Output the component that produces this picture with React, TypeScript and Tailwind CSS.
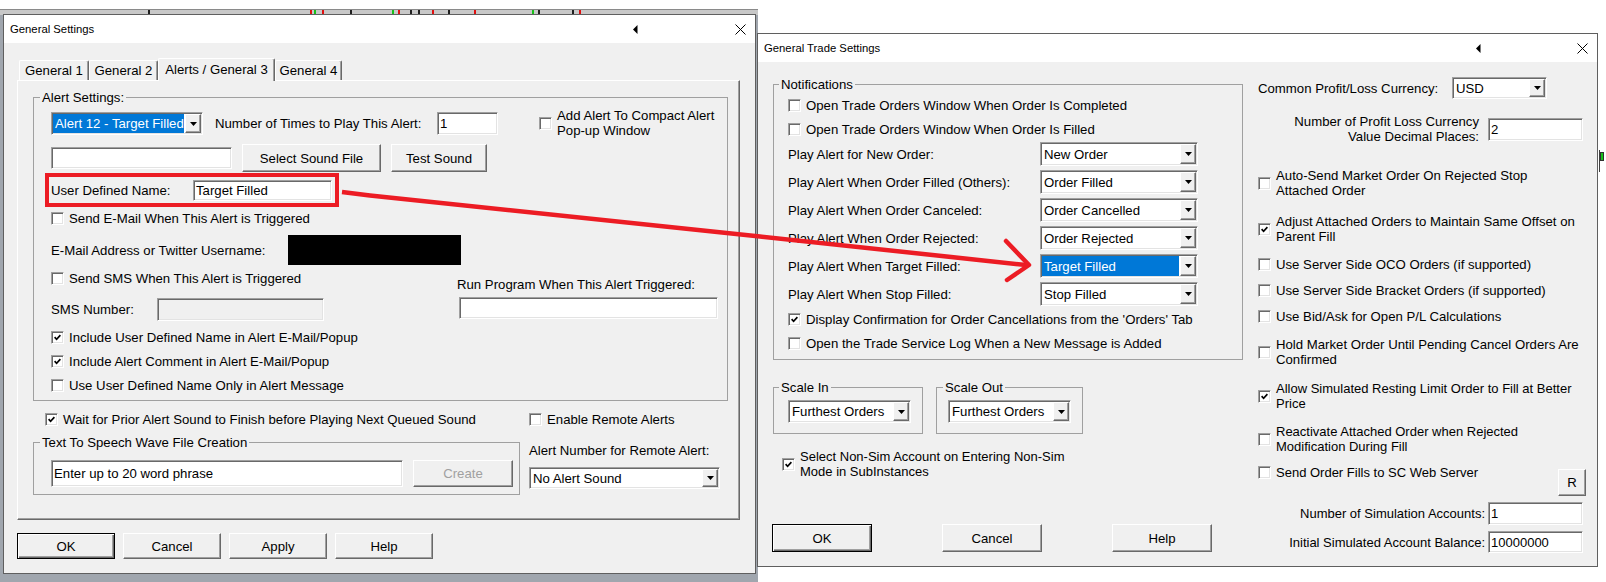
import React from 'react';

// classic 3D frames
const sunken =
  'border border-t-[#a0a0a0] border-l-[#a0a0a0] border-b-white border-r-white shadow-[inset_1px_1px_0_#696969,inset_-1px_-1px_0_#e3e3e3]';
const raised =
  'border border-t-white border-l-white border-b-[#696969] border-r-[#696969] shadow-[inset_-1px_-1px_0_#a0a0a0]';

function Box({ checked = false }: { checked?: boolean }) {
  return (
    <span className={`w-[13px] h-[13px] shrink-0 bg-white ${sunken} flex items-center justify-center`}>
      {checked && (
        <svg width="7" height="7" viewBox="0 0 7 7">
          <path d="M0.6 3.2 L2.6 5.3 L6.4 1.2" fill="none" stroke="#000" strokeWidth="1.7" />
        </svg>
      )}
    </span>
  );
}

function Check({ checked = false, label, className = '' }: { checked?: boolean; label: React.ReactNode; className?: string }) {
  return (
    <div className={`flex items-center shrink-0 ${className}`}>
      <Box checked={checked} />
      <span className="ml-[5px] whitespace-nowrap leading-[15px]">{label}</span>
    </div>
  );
}

function Edit({ value = '', className = '', disabled = false }: { value?: string; className?: string; disabled?: boolean }) {
  return (
    <div className={`${sunken} p-[1px] flex items-center shrink-0 ${disabled ? 'bg-[#f0f0f0]' : 'bg-white'} ${className}`}>
      <span className="pl-[1px] whitespace-nowrap">{value}</span>
    </div>
  );
}

function Combo({ value, selected = false, className = '' }: { value: string; selected?: boolean; className?: string }) {
  return (
    <div className={`${sunken} bg-white flex shrink-0 ${className}`}>
      <div className="flex-1 min-w-0 flex p-[1px]">
        <div
          className={`flex-1 flex items-center pl-[2px] whitespace-nowrap overflow-hidden ${
            selected ? 'bg-[#0078d7] text-white' : ''
          }`}
        >
          {value}
        </div>
      </div>
      <div className={`w-[16px] my-[1px] mr-[1px] bg-[#f0f0f0] ${raised} flex items-center justify-center`}>
        <svg width="7" height="4" viewBox="0 0 7 4">
          <path d="M0 0H7L3.5 4Z" fill="#000" />
        </svg>
      </div>
    </div>
  );
}

function Btn({
  label,
  className = '',
  primary = false,
  disabled = false,
}: {
  label: string;
  className?: string;
  primary?: boolean;
  disabled?: boolean;
}) {
  const frame = primary
    ? 'border border-black shadow-[inset_1px_1px_0_#fff,inset_-1px_-1px_0_#696969,inset_-2px_-2px_0_#a0a0a0]'
    : raised;
  return (
    <div
      className={`${frame} bg-[#f0f0f0] flex items-center justify-center shrink-0 whitespace-nowrap ${
        disabled ? 'text-[#a0a0a0]' : ''
      } ${className}`}
    >
      {label}
    </div>
  );
}

function Group({
  title,
  className = '',
  legendClass = 'ml-[6px]',
  children,
}: {
  title: string;
  className?: string;
  legendClass?: string;
  children?: React.ReactNode;
}) {
  return (
    <fieldset className={`border border-[#a0a0a0] min-w-0 shrink-0 ${className}`}>
      <legend className={`px-[2px] leading-[15px] ${legendClass}`}>{title}</legend>
      {children}
    </fieldset>
  );
}

function TitleBar({ title, gap }: { title: string; gap: string }) {
  return (
    <div className="h-[28px] bg-white flex items-center pl-[6px] pr-[9px] shrink-0">
      <span className="text-[11.3px]">{title}</span>
      <svg className="ml-auto" width="5" height="9" viewBox="0 0 5 9">
        <path d="M4.5 0 L0 4.5 L4.5 9Z" fill="#000" />
      </svg>
      <svg className={gap} width="11" height="11" viewBox="0 0 11 11">
        <path d="M0.5 0.5 L10.5 10.5 M10.5 0.5 L0.5 10.5" stroke="#000" strokeWidth="1" />
      </svg>
    </div>
  );
}

function Tab({ label, active = false, className = '' }: { label: string; active?: boolean; className?: string }) {
  return (
    <div
      className={`flex items-center justify-center whitespace-nowrap border-t border-l border-white border-r border-r-[#696969] rounded-t-[2px] shadow-[inset_-1px_0_0_#a0a0a0] ${
        active ? 'h-[23px] -mb-[1px] bg-[#f0f0f0] relative z-10 pb-[2px]' : 'h-[20px]'
      } ${className}`}
    >
      {label}
    </div>
  );
}

function GeneralSettings() {
  return (
    <div className="absolute left-[3px] top-[14px] w-[753px] h-[560px] bg-[#f0f0f0] border border-[#5f5f5f] flex flex-col">
      <TitleBar title="General Settings" gap="ml-[97px]" />
      <div className="px-[13px] flex flex-col">
        {/* tabs */}
        <div className="mt-[15px] h-[22px] flex items-end pl-[2px]">
          <Tab label="General 1" className="w-[70px]" />
          <Tab label="General 2" className="w-[69px]" />
          <Tab label="Alerts / General 3" active className="w-[117px]" />
          <Tab label="General 4" className="w-[67px]" />
        </div>

        {/* tab page */}
        <div className="w-[723px] h-[440px] border border-t-white border-l-white border-r-[#696969] border-b-[#696969] shadow-[inset_-1px_-1px_0_#a0a0a0] pl-[15px] pt-[9px] flex flex-col">
          <Group title="Alert Settings:" className="w-[695px] h-[311px]">
            <div className="pl-[17px] flex flex-col">
              <div className="mt-[7px] h-[23px] flex items-center">
                <Combo value="Alert 12 - Target Filled" selected className="w-[152px] h-[23px]" />
                <span className="ml-[12px] w-[222px] whitespace-nowrap">Number of Times to Play This Alert:</span>
                <Edit value="1" className="w-[61px] h-[23px]" />
                <div className="ml-[41px] self-start -mt-[4px] flex items-center">
                  <Box />
                  <span className="ml-[5px] leading-[15px] whitespace-nowrap">
                    Add Alert To Compact Alert
                    <br />
                    Pop-up Window
                  </span>
                </div>
              </div>

              <div className="mt-[9px] h-[28px] flex items-center">
                <Edit className="w-[181px] h-[22px]" />
                <Btn label="Select Sound File" className="ml-[10px] w-[139px] h-[28px]" />
                <Btn label="Test Sound" className="ml-[10px] w-[96px] h-[28px]" />
              </div>

              <div className="mt-[1px] -ml-[6px] w-[294px] h-[34px] border-4 border-[#ec1c24] flex items-center pl-[2px]">
                <span className="w-[142px] whitespace-nowrap">User Defined Name:</span>
                <Edit value="Target Filled" className="w-[139px] h-[21px]" />
              </div>

              <Check label="Send E-Mail When This Alert is Triggered" className="mt-[1px] h-[20px]" />

              <div className="mt-[7px] h-[30px] flex items-center">
                <span className="w-[237px] whitespace-nowrap">E-Mail Address or Twitter Username:</span>
                <div className="w-[173px] h-[30px] bg-black" />
              </div>

              <div className="flex items-start">
                <div className="w-[406px] flex flex-col">
                  <Check label="Send SMS When This Alert is Triggered" className="mt-[3px] h-[20px]" />
                  <div className="mt-[10px] h-[23px] flex items-center">
                    <span className="w-[106px]">SMS Number:</span>
                    <Edit disabled className="w-[167px] h-[23px]" />
                  </div>
                </div>
                <div className="flex flex-col">
                  <span className="mt-[12px] leading-[15px] whitespace-nowrap">Run Program When This Alert Triggered:</span>
                  <Edit className="mt-[5px] ml-[2px] w-[259px] h-[22px]" />
                </div>
              </div>

              <Check checked label="Include User Defined Name in Alert E-Mail/Popup" className="mt-[6px] h-[20px]" />
              <Check checked label="Include Alert Comment in Alert E-Mail/Popup" className="mt-[4px] h-[20px]" />
              <Check label="Use User Defined Name Only in Alert Message" className="mt-[4px] h-[20px]" />
            </div>
          </Group>

          <div className="mt-[8px] h-[20px] flex items-center">
            <Check
              checked
              label="Wait for Prior Alert Sound to Finish before Playing Next Queued Sound"
              className="ml-[12px] w-[484px]"
            />
            <Check label="Enable Remote Alerts" />
          </div>

          <div className="mt-[6px] flex items-start">
            <Group title="Text To Speech Wave File Creation" className="w-[487px] h-[60px]">
              <div className="mt-[10px] pl-[17px] flex items-center">
                <Edit value="Enter up to 20 word phrase" className="w-[352px] h-[27px]" />
                <Btn label="Create" disabled className="ml-[10px] w-[100px] h-[27px]" />
              </div>
            </Group>
            <div className="ml-[9px] flex flex-col">
              <span className="mt-[8px] leading-[15px] whitespace-nowrap">Alert Number for Remote Alert:</span>
              <Combo value="No Alert Sound" className="mt-[9px] w-[191px] h-[22px]" />
            </div>
          </div>
        </div>

        <div className="mt-[13px] flex gap-[8px]">
          <Btn label="OK" primary className="w-[98px] h-[26px]" />
          <Btn label="Cancel" className="w-[98px] h-[26px]" />
          <Btn label="Apply" className="w-[98px] h-[26px]" />
          <Btn label="Help" className="w-[98px] h-[26px]" />
        </div>
      </div>
    </div>
  );
}

const alertRows: [string, string, boolean][] = [
  ['Play Alert for New Order:', 'New Order', false],
  ['Play Alert When Order Filled (Others):', 'Order Filled', false],
  ['Play Alert When Order Canceled:', 'Order Cancelled', false],
  ['Play Alert When Order Rejected:', 'Order Rejected', false],
  ['Play Alert When Target Filled:', 'Target Filled', true],
  ['Play Alert When Stop Filled:', 'Stop Filled', false],
];

function TwoLine({ checked = false, a, b, className = '' }: { checked?: boolean; a: string; b: string; className?: string }) {
  return (
    <div className={`flex items-center ${className}`}>
      <Box checked={checked} />
      <span className="ml-[5px] leading-[15px] whitespace-nowrap">
        {a}
        <br />
        {b}
      </span>
    </div>
  );
}

function GeneralTradeSettings() {
  return (
    <div className="absolute left-[757px] top-[33px] w-[841px] h-[534px] bg-[#f0f0f0] border border-[#5f5f5f] flex flex-col">
      <TitleBar title="General Trade Settings" gap="ml-[96px]" />
      <div className="pl-[15px] pt-[15px] flex">
        {/* left column */}
        <div className="w-[470px] flex flex-col">
          <Group title="Notifications" legendClass="ml-[5px]" className="w-[470px] h-[283px]">
            <div className="pl-[14px] flex flex-col">
              <Check label="Open Trade Orders Window When Order Is Completed" className="mt-[3px] h-[20px]" />
              <Check label="Open Trade Orders Window When Order Is Filled" className="mt-[4px] h-[20px]" />
              <div className="mt-[3px] flex flex-col gap-[4px]">
                {alertRows.map(([label, value, sel]) => (
                  <div key={label} className="h-[24px] flex items-center">
                    <span className="w-[252px] whitespace-nowrap">{label}</span>
                    <Combo value={value} selected={sel} className="w-[158px] h-[24px]" />
                  </div>
                ))}
              </div>
              <Check
                checked
                label="Display Confirmation for Order Cancellations from the 'Orders' Tab"
                className="mt-[3px] h-[20px]"
              />
              <Check label="Open the Trade Service Log When a New Message is Added" className="mt-[4px] h-[20px]" />
            </div>
          </Group>

          <div className="mt-[20px] flex gap-[13px]">
            <Group title="Scale In" legendClass="ml-[5px]" className="w-[150px] h-[54px]">
              <div className="pl-[14px] mt-[5px]">
                <Combo value="Furthest Orders" className="w-[123px] h-[23px]" />
              </div>
            </Group>
            <Group title="Scale Out" className="w-[147px] h-[54px]">
              <div className="pl-[11px] mt-[5px]">
                <Combo value="Furthest Orders" className="w-[123px] h-[23px]" />
              </div>
            </Group>
          </div>

          <TwoLine
            checked
            a="Select Non-Sim Account on Entering Non-Sim"
            b="Mode in SubInstances"
            className="mt-[15px] pl-[9px] text-[13px]"
          />

          <div className="mt-[45px] -ml-[1px] flex gap-[70px]">
            <Btn label="OK" primary className="w-[100px] h-[28px]" />
            <Btn label="Cancel" className="w-[100px] h-[28px]" />
            <Btn label="Help" className="w-[100px] h-[28px]" />
          </div>
        </div>

        {/* right column */}
        <div className="ml-[15px] w-[328px] flex flex-col">
          <div className="h-[22px] flex items-center">
            <span className="w-[194px] whitespace-nowrap">Common Profit/Loss Currency:</span>
            <Combo value="USD" className="w-[95px] h-[22px]" />
          </div>
          <div className="mt-[15px] h-[30px] flex items-center justify-end pr-[3px]">
            <span className="mr-[9px] text-right leading-[15px] whitespace-nowrap">
              Number of Profit Loss Currency
              <br />
              Value Decimal Places:
            </span>
            <Edit value="2" className="w-[95px] h-[23px]" />
          </div>

          <TwoLine a="Auto-Send Market Order On Rejected Stop" b="Attached Order" className="mt-[24px]" />
          <TwoLine checked a="Adjust Attached Orders to Maintain Same Offset on" b="Parent Fill" className="mt-[16px]" />
          <Check label="Use Server Side OCO Orders (if supported)" className="mt-[13px]" />
          <Check label="Use Server Side Bracket Orders (if supported)" className="mt-[11px]" />
          <Check label="Use Bid/Ask for Open P/L Calculations" className="mt-[11px]" />
          <TwoLine a="Hold Market Order Until Pending Cancel Orders Are" b="Confirmed" className="mt-[13px]" />
          <TwoLine
            checked
            a="Allow Simulated Resting Limit Order to Fill at Better"
            b="Price"
            className="mt-[14px] text-[13px]"
          />
          <TwoLine
            a="Reactivate Attached Order when Rejected"
            b="Modification During Fill"
            className="mt-[13px] text-[13px]"
          />
          <div className="mt-[11px] flex items-start">
            <Check label="Send Order Fills to SC Web Server" className="text-[13px]" />
            <Btn label="R" className="ml-auto mt-[4px] w-[28px] h-[27px]" />
          </div>
          <div className="mt-[6px] h-[23px] flex items-center justify-end pr-[3px] text-[13px]">
            <span className="mr-[3px] whitespace-nowrap">Number of Simulation Accounts:</span>
            <Edit value="1" className="w-[95px] h-[23px]" />
          </div>
          <div className="mt-[6px] h-[22px] flex items-center justify-end pr-[3px] text-[13px]">
            <span className="mr-[3px] whitespace-nowrap">Initial Simulated Account Balance:</span>
            <Edit value="10000000" className="w-[95px] h-[22px]" />
          </div>
        </div>
      </div>
    </div>
  );
}

// chart ticks peeking out above the dialogs
const ticks: [string, string][] = [
  ['ml-[148px]', 'bg-[#202020]'],
  ['ml-[160px]', 'bg-[#e01010]'],
  ['ml-[2px]', 'bg-[#18c018]'],
  ['ml-[6px]', 'bg-[#e01010]'],
  ['ml-[26px]', 'bg-[#202020]'],
  ['ml-[40px]', 'bg-[#18c018]'],
  ['ml-[4px]', 'bg-[#e01010]'],
  ['ml-[10px]', 'bg-[#202020]'],
  ['ml-[6px]', 'bg-[#202020]'],
  ['ml-[12px]', 'bg-[#e01010]'],
  ['ml-[14px]', 'bg-[#202020]'],
  ['ml-[24px]', 'bg-[#e01010]'],
  ['ml-[56px]', 'bg-[#18c018]'],
  ['ml-[4px]', 'bg-[#202020]'],
  ['ml-[32px]', 'bg-[#202020]'],
  ['ml-[5px]', 'bg-[#e01010]'],
];

export default function App() {
  return (
    <div className="relative w-[1606px] h-[582px] overflow-hidden bg-white text-black text-[13.2px] leading-[15px] font-['Liberation_Sans',Arial,sans-serif]">
      {/* chart window behind */}
      <div className="absolute left-0 top-[9px] w-[758px] h-[573px] bg-[#a0a6ae] border-t border-[#8a8a8a]">
        <div className="h-[5px] bg-[#c8c8c8] flex items-start">
          {ticks.map(([ml, bg], i) => (
            <span key={i} className={`w-[2px] h-[4px] ${ml} ${bg}`} />
          ))}
        </div>
      </div>
      <div className="absolute left-[1599px] top-[150px] w-[6px] h-[22px] border-l border-[#404040] flex items-start">
        <span className="mt-[2px] w-[4px] h-[9px] bg-[#18c018] border border-[#303030]" />
      </div>

      <GeneralSettings />
      <GeneralTradeSettings />

      {/* red annotation arrow */}
      <svg className="absolute left-0 top-0 pointer-events-none" width="1606" height="582" viewBox="0 0 1606 582">
        <polyline
          points="342,192 370,195.5 760,236.5 1026,265"
          fill="none"
          stroke="#ec1c24"
          strokeWidth="4.5"
          strokeLinejoin="round"
        />
        <polyline
          points="1006,241 1029,265 1007,280"
          fill="none"
          stroke="#ec1c24"
          strokeWidth="4.5"
          strokeLinejoin="round"
          strokeLinecap="round"
        />
      </svg>
    </div>
  );
}
